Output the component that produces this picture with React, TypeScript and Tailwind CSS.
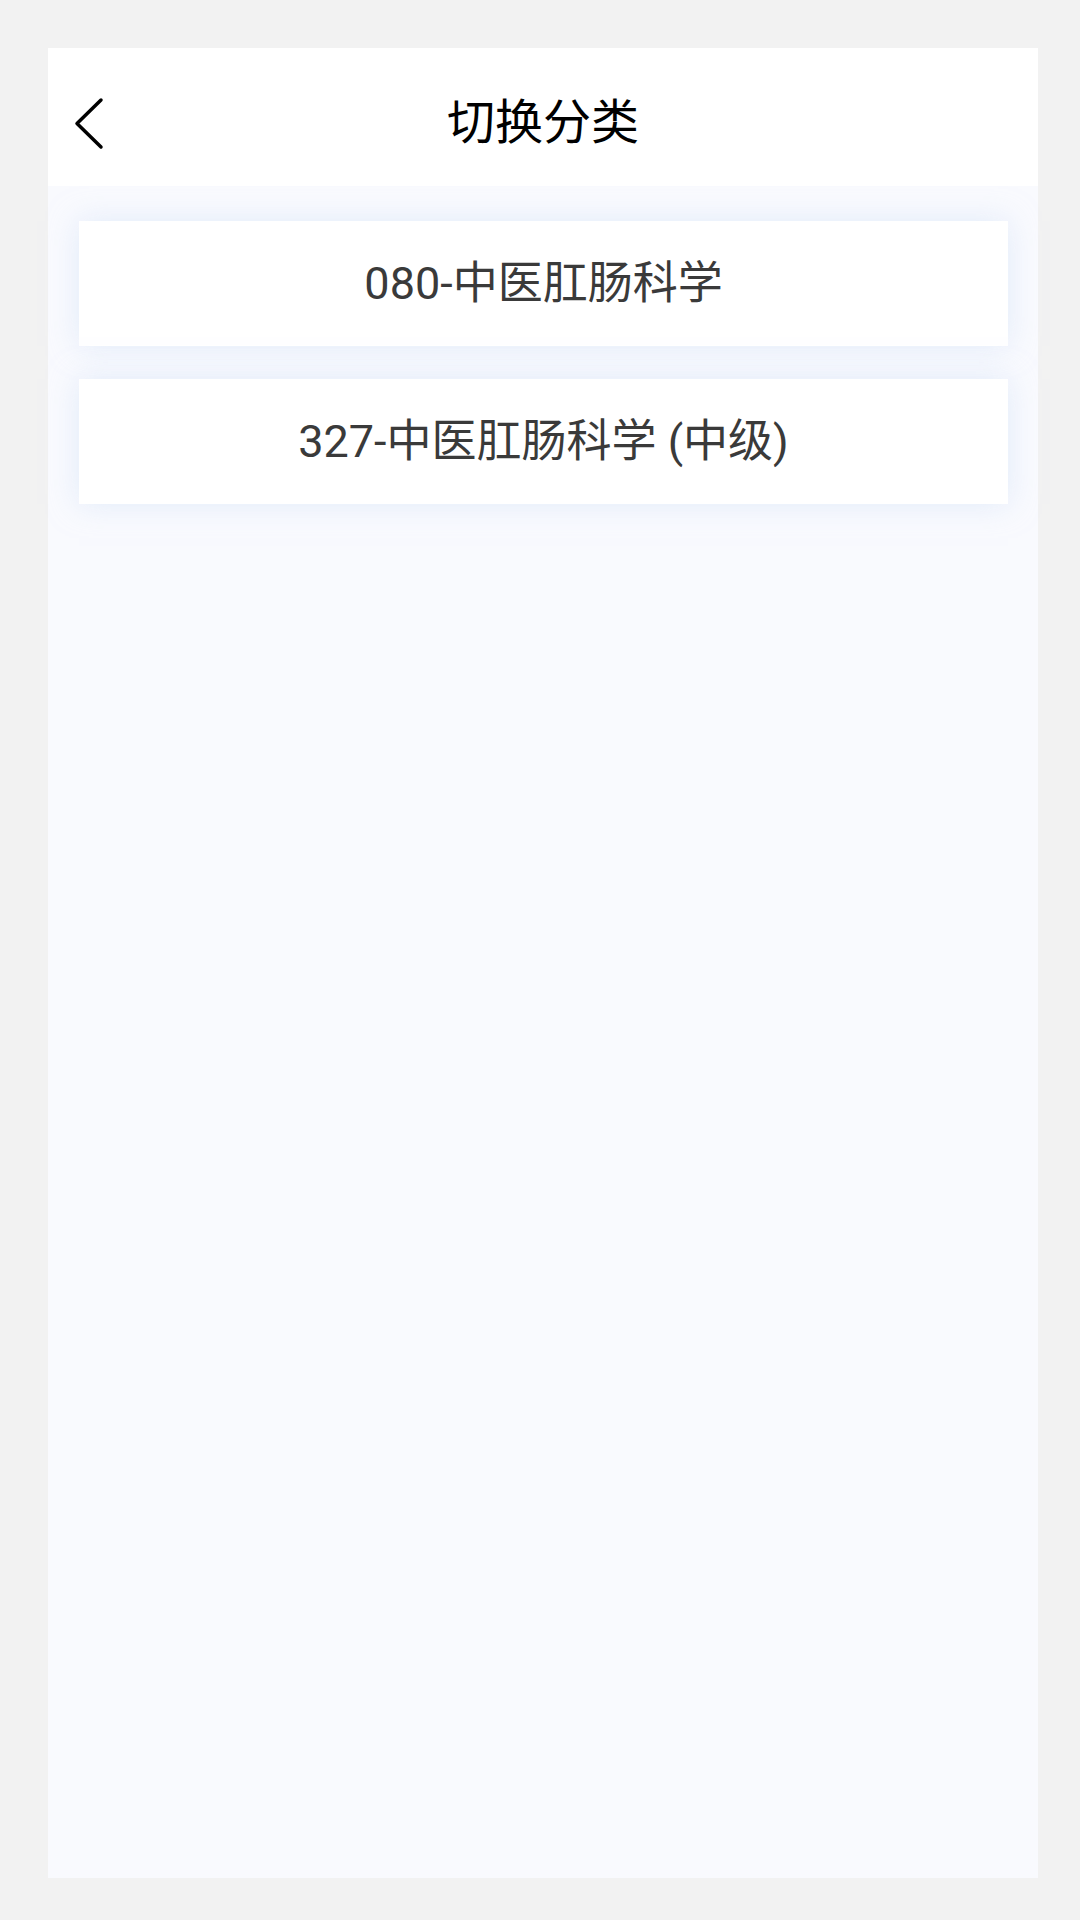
import React from "react";

const categories = ["080-中医肛肠科学", "327-中医肛肠科学 (中级)"];

function BackIcon() {
    return (
        <svg width="34" height="56" viewBox="0 0 34 56" fill="none" className="shrink-0">
            <path
                d="M28 4 L4 27.5 L28 51"
                stroke="#000"
                strokeWidth="3.5"
                strokeLinecap="round"
                strokeLinejoin="round"
            />
        </svg>
    );
}

export default function App() {
    return (
        <div
            className="min-h-screen w-full bg-[#f2f2f2] pt-[48px] pb-[42px] px-[42px] pl-[48px]"
            style={{ fontFamily: "Roboto, 'Noto Sans CJK SC', sans-serif" }}
        >
            <div className="flex h-[1830px] w-[990px] flex-col bg-[#f9fafe]">
                {/* Header */}
                <div className="relative flex h-[138px] shrink-0 items-center justify-center bg-white pt-3">
                    <div className="absolute left-[25px] top-[48px]">
                        <BackIcon />
                    </div>
                    <span className="text-[48px] leading-none text-black">切换分类</span>
                </div>

                {/* Category list */}
                <div className="flex flex-col gap-[33px] pl-[31px] pr-[30px] pt-[35px]">
                    {categories.map((name) => (
                        <button
                            key={name}
                            className="flex h-[125px] items-center justify-center bg-white text-[45px] text-[#3a3a3a] shadow-[0_0_28px_rgba(205,222,245,0.55)]"
                        >
                            {name}
                        </button>
                    ))}
                </div>
            </div>
        </div>
    );
}
